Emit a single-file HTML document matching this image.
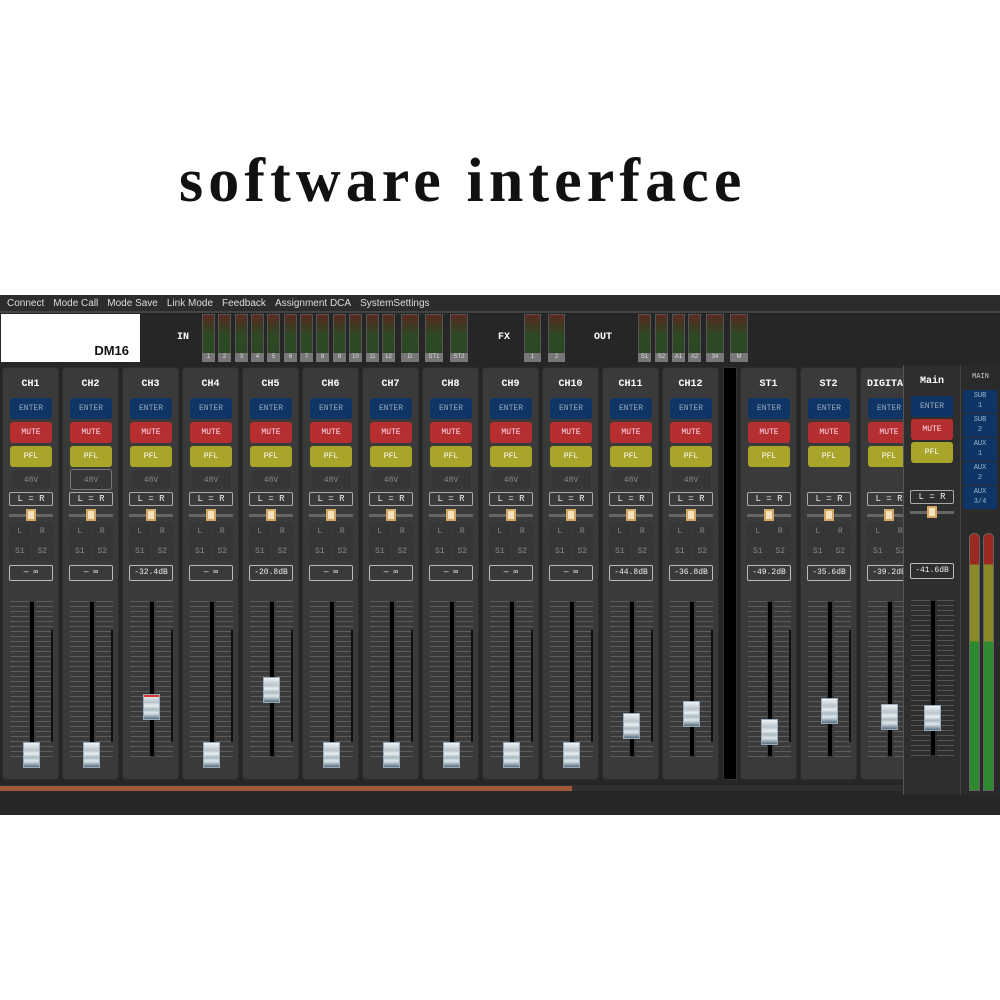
<!DOCTYPE html>
<html><head><style>
*{margin:0;padding:0;box-sizing:border-box}
body{width:1000px;height:1000px;background:#fff;position:relative;overflow:hidden;font-family:"Liberation Mono",monospace}
.t{position:absolute;left:179px;top:146px;font:bold 62px "Liberation Serif",serif;color:#111;letter-spacing:5.1px;white-space:nowrap}
.app{position:absolute;left:0;top:295px;width:1000px;height:520px;background:#262626}
.menu{position:absolute;left:0;top:0;width:1000px;height:18px;background:#2c2c2c;border-bottom:2px solid #444;font:10px "Liberation Sans",sans-serif;color:#ddd;line-height:18px;padding-left:7px}
.menu span{margin-right:9px}
.logo{position:absolute;left:1px;top:19px;width:139px;height:48px;background:#fff;font:bold 13px "Liberation Sans",sans-serif;color:#111;text-align:right;padding:29px 11px 0 0}
.hl{position:absolute;top:37px;color:#fff;font:bold 10px "Liberation Mono",monospace}
.m{position:absolute;top:19px;width:13px;height:48px;background:linear-gradient(#5a2a22,#3d3a22 25%,#2e4a25 45%,#2a4422);border:1px solid #555}
.m b{position:absolute;left:-1px;right:-1px;bottom:-1px;height:9px;background:#777;font:6px "Liberation Sans",sans-serif;color:#ddd;text-align:center;line-height:9px}
.s{position:absolute;top:72px;width:57px;height:413px;background:#3a3a3a;border-radius:4px;border:1px solid #2e2e2e}
.n{position:absolute;left:0;width:100%;top:11px;text-align:center;color:#fff;font:bold 10px "Liberation Mono",monospace}
.b{position:absolute;left:7px;width:42px;height:21px;border-radius:3px;font:8px "Liberation Mono",monospace;text-align:center;line-height:21px}
.en{top:30px;background:#0e3566;color:#9ab}
.mu{top:54px;background:#b52f30;color:#fde}
.pf{top:78px;background:#a9a52a;color:#fff}
.v{top:101px;background:#363636;color:#888;border:1px solid #3e3e3e}
.lr{position:absolute;left:6px;width:44px;top:124px;height:14px;border:1px solid #aaa;border-radius:2px;color:#eee;font:9px "Liberation Mono",monospace;text-align:center;line-height:12px}
.pan{position:absolute;left:6px;width:44px;top:146px;height:3px;background:#666}
.pan i{position:absolute;left:17px;top:-5px;width:10px;height:12px;background:#f3e2c0;border:2px solid #d6a762}
.g{position:absolute;left:6px;top:155px;width:44px;height:38px;display:grid;grid-template-columns:1fr 1fr;gap:1px}
.g span{background:#363636;color:#888;font:8px "Liberation Mono",monospace;text-align:center;line-height:18px}
.db{position:absolute;left:6px;width:44px;top:197px;height:16px;border:1px solid #bbb;border-radius:2px;color:#eee;font:8px "Liberation Mono",monospace;text-align:center;line-height:14px}
.tl,.tr2{position:absolute;top:233px;height:156px;background:repeating-linear-gradient(#777 0,#777 1px,transparent 1px,transparent 5px)}
.tl{left:7px;width:19px;opacity:.55}.tr2{left:33px;width:17px;opacity:.55}
.tk{position:absolute;left:27px;top:234px;width:4px;height:154px;background:#000}
.mt{position:absolute;left:48px;top:262px;width:2px;height:112px;background:#111}
.k{position:absolute;left:20px;width:17px;height:26px;background:linear-gradient(#eef2f4,#b8c4cc 30%,#e8eef0 45%,#aab8c0 60%,#e0e8ec 75%,#5a7080);border:1px solid #9ab}
.main{position:absolute;left:903px;top:70px;width:57px;height:430px;background:#2e2e2e;border-left:1px solid #555}
.rp{position:absolute;left:960px;top:70px;width:40px;height:430px;background:#2a2a2a;border-left:1px solid #444}
.sb{position:absolute;left:2px;width:34px;height:23px;background:#0e3566;color:#9bc;font:7px "Liberation Mono",monospace;text-align:center;line-height:10px;padding-top:1px}
</style></head><body>
<div class="t">software interface</div>
<div class="app">
<div class="menu"><span>Connect</span><span>Mode Call</span><span>Mode Save</span><span>Link Mode</span><span>Feedback</span><span>Assignment DCA</span><span>SystemSettings</span></div>
<div class="logo">DM16</div>
<div class="hl" style="left:177px">IN</div><div class="hl" style="left:498px">FX</div><div class="hl" style="left:594px">OUT</div>
<div class="m" style="left:202px"><b>1</b></div><div class="m" style="left:218px"><b>2</b></div><div class="m" style="left:235px"><b>3</b></div><div class="m" style="left:251px"><b>4</b></div><div class="m" style="left:267px"><b>5</b></div><div class="m" style="left:284px"><b>6</b></div><div class="m" style="left:300px"><b>7</b></div><div class="m" style="left:316px"><b>8</b></div><div class="m" style="left:333px"><b>9</b></div><div class="m" style="left:349px"><b>10</b></div><div class="m" style="left:366px"><b>11</b></div><div class="m" style="left:382px"><b>12</b></div>
<div class="m" style="left:401px;width:18px"><b>D</b></div><div class="m" style="left:425px;width:18px"><b>ST1</b></div><div class="m" style="left:450px;width:18px"><b>ST2</b></div>
<div class="m" style="left:524px;width:17px"><b>1</b></div><div class="m" style="left:548px;width:17px"><b>2</b></div>
<div class="m" style="left:638px"><b>S1</b></div><div class="m" style="left:655px"><b>S2</b></div><div class="m" style="left:672px"><b>A1</b></div><div class="m" style="left:688px"><b>A2</b></div><div class="m" style="left:706px;width:18px"><b>34</b></div><div class="m" style="left:730px;width:18px"><b>M</b></div>

<div class="s" style="left:2px"><div class="n">CH1</div><div class="b en">ENTER</div><div class="b mu">MUTE</div><div class="b pf">PFL</div><div class="b v">48V</div><div class="lr">L = R</div><div class="pan"><i></i></div><div class="g"><span>L</span><span>R</span><span>S1</span><span>S2</span></div><div class="db">— ∞</div><div class="tl"></div><div class="tr2"></div><div class="tk"></div><div class="mt"></div><div class="k" style="top:374px"></div></div>
<div class="s" style="left:62px"><div class="n">CH2</div><div class="b en">ENTER</div><div class="b mu">MUTE</div><div class="b pf">PFL</div><div class="b v" style="border-color:#777">48V</div><div class="lr">L = R</div><div class="pan"><i></i></div><div class="g"><span>L</span><span>R</span><span>S1</span><span>S2</span></div><div class="db">— ∞</div><div class="tl"></div><div class="tr2"></div><div class="tk"></div><div class="mt"></div><div class="k" style="top:374px"></div></div>
<div class="s" style="left:122px"><div class="n">CH3</div><div class="b en">ENTER</div><div class="b mu">MUTE</div><div class="b pf">PFL</div><div class="b v">48V</div><div class="lr">L = R</div><div class="pan"><i></i></div><div class="g"><span>L</span><span>R</span><span>S1</span><span>S2</span></div><div class="db">-32.4dB</div><div class="tl"></div><div class="tr2"></div><div class="tk"></div><div class="mt"></div><div class="k" style="top:326px;box-shadow:inset 0 12px 0 -10px #d33"></div></div>
<div class="s" style="left:182px"><div class="n">CH4</div><div class="b en">ENTER</div><div class="b mu">MUTE</div><div class="b pf">PFL</div><div class="b v">48V</div><div class="lr">L = R</div><div class="pan"><i></i></div><div class="g"><span>L</span><span>R</span><span>S1</span><span>S2</span></div><div class="db">— ∞</div><div class="tl"></div><div class="tr2"></div><div class="tk"></div><div class="mt"></div><div class="k" style="top:374px"></div></div>
<div class="s" style="left:242px"><div class="n">CH5</div><div class="b en">ENTER</div><div class="b mu">MUTE</div><div class="b pf">PFL</div><div class="b v">48V</div><div class="lr">L = R</div><div class="pan"><i></i></div><div class="g"><span>L</span><span>R</span><span>S1</span><span>S2</span></div><div class="db">-20.8dB</div><div class="tl"></div><div class="tr2"></div><div class="tk"></div><div class="mt"></div><div class="k" style="top:309px"></div></div>
<div class="s" style="left:302px"><div class="n">CH6</div><div class="b en">ENTER</div><div class="b mu">MUTE</div><div class="b pf">PFL</div><div class="b v">48V</div><div class="lr">L = R</div><div class="pan"><i></i></div><div class="g"><span>L</span><span>R</span><span>S1</span><span>S2</span></div><div class="db">— ∞</div><div class="tl"></div><div class="tr2"></div><div class="tk"></div><div class="mt"></div><div class="k" style="top:374px"></div></div>
<div class="s" style="left:362px"><div class="n">CH7</div><div class="b en">ENTER</div><div class="b mu">MUTE</div><div class="b pf">PFL</div><div class="b v">48V</div><div class="lr">L = R</div><div class="pan"><i></i></div><div class="g"><span>L</span><span>R</span><span>S1</span><span>S2</span></div><div class="db">— ∞</div><div class="tl"></div><div class="tr2"></div><div class="tk"></div><div class="mt"></div><div class="k" style="top:374px"></div></div>
<div class="s" style="left:422px"><div class="n">CH8</div><div class="b en">ENTER</div><div class="b mu">MUTE</div><div class="b pf">PFL</div><div class="b v">48V</div><div class="lr">L = R</div><div class="pan"><i></i></div><div class="g"><span>L</span><span>R</span><span>S1</span><span>S2</span></div><div class="db">— ∞</div><div class="tl"></div><div class="tr2"></div><div class="tk"></div><div class="mt"></div><div class="k" style="top:374px"></div></div>
<div class="s" style="left:482px"><div class="n">CH9</div><div class="b en">ENTER</div><div class="b mu">MUTE</div><div class="b pf">PFL</div><div class="b v">48V</div><div class="lr">L = R</div><div class="pan"><i></i></div><div class="g"><span>L</span><span>R</span><span>S1</span><span>S2</span></div><div class="db">— ∞</div><div class="tl"></div><div class="tr2"></div><div class="tk"></div><div class="mt"></div><div class="k" style="top:374px"></div></div>
<div class="s" style="left:542px"><div class="n">CH10</div><div class="b en">ENTER</div><div class="b mu">MUTE</div><div class="b pf">PFL</div><div class="b v">48V</div><div class="lr">L = R</div><div class="pan"><i></i></div><div class="g"><span>L</span><span>R</span><span>S1</span><span>S2</span></div><div class="db">— ∞</div><div class="tl"></div><div class="tr2"></div><div class="tk"></div><div class="mt"></div><div class="k" style="top:374px"></div></div>
<div class="s" style="left:602px"><div class="n">CH11</div><div class="b en">ENTER</div><div class="b mu">MUTE</div><div class="b pf">PFL</div><div class="b v">48V</div><div class="lr">L = R</div><div class="pan"><i></i></div><div class="g"><span>L</span><span>R</span><span>S1</span><span>S2</span></div><div class="db">-44.8dB</div><div class="tl"></div><div class="tr2"></div><div class="tk"></div><div class="mt"></div><div class="k" style="top:345px"></div></div>
<div class="s" style="left:662px"><div class="n">CH12</div><div class="b en">ENTER</div><div class="b mu">MUTE</div><div class="b pf">PFL</div><div class="b v">48V</div><div class="lr">L = R</div><div class="pan"><i></i></div><div class="g"><span>L</span><span>R</span><span>S1</span><span>S2</span></div><div class="db">-36.8dB</div><div class="tl"></div><div class="tr2"></div><div class="tk"></div><div class="mt"></div><div class="k" style="top:333px"></div></div>
<div style="position:absolute;left:723px;top:72px;width:14px;height:413px;background:#000;border:1px solid #333"></div>
<div class="s" style="left:740px"><div class="n">ST1</div><div class="b en">ENTER</div><div class="b mu">MUTE</div><div class="b pf">PFL</div><div class="lr">L = R</div><div class="pan"><i></i></div><div class="g"><span>L</span><span>R</span><span>S1</span><span>S2</span></div><div class="db">-49.2dB</div><div class="tl"></div><div class="tr2"></div><div class="tk"></div><div class="mt"></div><div class="k" style="top:351px"></div></div>
<div class="s" style="left:800px"><div class="n">ST2</div><div class="b en">ENTER</div><div class="b mu">MUTE</div><div class="b pf">PFL</div><div class="lr">L = R</div><div class="pan"><i></i></div><div class="g"><span>L</span><span>R</span><span>S1</span><span>S2</span></div><div class="db">-35.6dB</div><div class="tl"></div><div class="tr2"></div><div class="tk"></div><div class="mt"></div><div class="k" style="top:330px"></div></div>
<div class="s" style="left:860px"><div class="n" style="text-align:left;left:6px">DIGITAL</div><div class="b en">ENTER</div><div class="b mu">MUTE</div><div class="b pf">PFL</div><div class="lr">L = R</div><div class="pan"><i></i></div><div class="g"><span>L</span><span>R</span><span>S1</span><span>S2</span></div><div class="db">-39.2dB</div><div class="tl"></div><div class="tr2"></div><div class="tk"></div><div class="mt"></div><div class="k" style="top:336px"></div></div>
<div class="main"><div class="n" style="top:11px">Main</div><div class="b en" style="top:31px">ENTER</div><div class="b mu" style="top:54px">MUTE</div><div class="b pf" style="top:77px">PFL</div><div class="lr" style="top:125px">L = R</div><div class="pan" style="top:146px"><i></i></div><div class="db" style="top:198px">-41.6dB</div><div class="tl" style="top:235px"></div><div class="tr2" style="top:235px"></div><div class="tk" style="top:236px"></div><div class="k" style="top:340px"></div></div>
<div class="rp"><div style="color:#ccc;font:7px 'Liberation Mono',monospace;text-align:center;margin-top:8px">MAIN</div>
<div class="sb" style="top:25px">SUB<br>1</div><div class="sb" style="top:49px">SUB<br>2</div><div class="sb" style="top:73px">AUX<br>1</div><div class="sb" style="top:97px">AUX<br>2</div><div class="sb" style="top:121px">AUX<br>3/4</div>
<div style="position:absolute;left:8px;top:168px;width:11px;height:258px;border-radius:5px 5px 0 0;background:linear-gradient(#9a2a20 0,#9a2a20 12%,#8a8a2a 12%,#8a8a2a 42%,#2d8a30 42%);border:1px solid #666"></div>
<div style="position:absolute;left:22px;top:168px;width:11px;height:258px;border-radius:5px 5px 0 0;background:linear-gradient(#9a2a20 0,#9a2a20 12%,#8a8a2a 12%,#8a8a2a 42%,#2d8a30 42%);border:1px solid #666"></div></div>
<div style="position:absolute;left:0;top:490px;width:903px;height:6px;background:#2f2f2f"></div>
<div style="position:absolute;left:0;top:491px;width:572px;height:5px;background:#a0573a"></div>
</div>
</body></html>
